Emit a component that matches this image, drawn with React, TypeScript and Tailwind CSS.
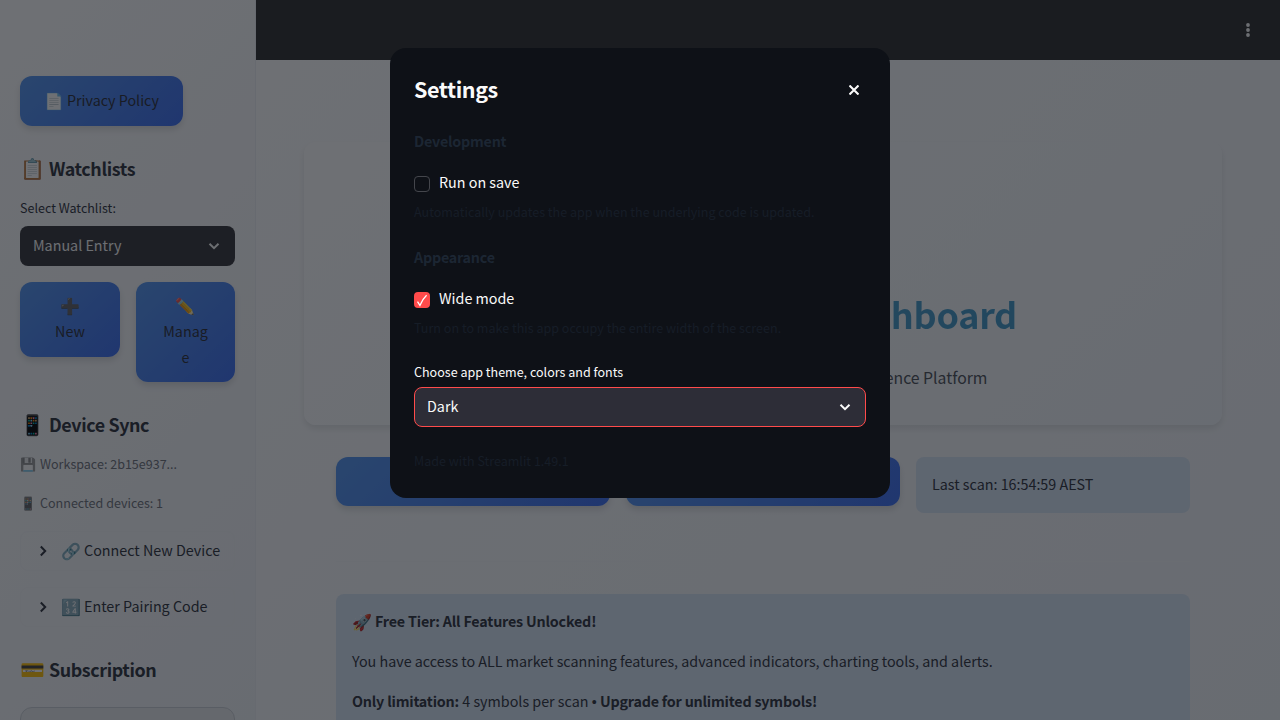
import type { ReactNode } from "react";

const blue =
  "bg-[linear-gradient(135deg,#5596ef_0%,#3d6ff2_100%)] shadow-[0_4px_6px_rgba(0,0,0,0.12)] rounded-xl text-[#2b2e38]";

function Heading({ icon, children }: { icon: string; children: ReactNode }) {
  return (
    <h3 className="flex h-6 items-center gap-[5px] whitespace-nowrap text-[17.9px] font-bold leading-6 tracking-[-0.4px] text-[#2e323c]">
      <span className="w-6 text-[20px] font-normal tracking-normal">{icon}</span>
      {children}
    </h3>
  );
}

function Chevron({ className }: { className: string }) {
  return (
    <svg viewBox="0 0 12 12" className={className} fill="none" stroke="currentColor" strokeWidth="2">
      <path d="M1.5 3.8 6 8.2l4.5-4.4" />
    </svg>
  );
}

function Caption({ icon, children }: { icon: string; children: ReactNode }) {
  return (
    <p className="flex h-5 items-center gap-1 whitespace-nowrap text-[12.54px] leading-5 text-[#6f737b]">
      <span className="w-4 text-[13px] opacity-60">{icon}</span>
      {children}
    </p>
  );
}

function Expander({ icon, children }: { icon: string; children: ReactNode }) {
  return (
    <div className="flex h-10 w-[215px] items-center whitespace-nowrap rounded-lg border border-[#f3f5f8] pb-[2px] pl-4 text-[14.32px] text-[#2e323c]">
      <Chevron className="mr-3 mt-[2px] size-3 -rotate-90" />
      <span className="w-[23px] text-[16px]">{icon}</span>
      {children}
    </div>
  );
}

function Sidebar() {
  return (
    <aside className="h-[720px] w-64 shrink-0 overflow-hidden border-r border-[#eef1f5] bg-[linear-gradient(135deg,#ffffff_0%,#f1f4f8_100%)] px-5 pt-[76px]">
      <div className={`${blue} flex h-[50px] w-[163px] items-center justify-center gap-[3px] pb-[2px] text-[14.3px]`}>
        <span className="text-[16px]">📄</span>Privacy Policy
      </div>
      <div className="mt-[30px]">
        <Heading icon="📋">Watchlists</Heading>
      </div>
      <p className="mt-[18px] h-5 text-[12.54px] leading-5 text-[#2e323c]">Select Watchlist:</p>
      <div className="mt-2 flex h-10 w-[215px] items-center justify-between rounded-lg bg-[#36363a] px-[13px] pr-[15px] text-[14.32px] leading-5 text-[#fafafa]">
        <span className="pb-[2px]">Manual Entry</span>
        <Chevron className="size-3" />
      </div>
      <div className="mt-4 flex h-[100px] w-[215px] items-start gap-4">
        <div className={`${blue} flex h-[75px] w-[100px] flex-col items-center pt-[11px] text-[14.3px] leading-[25.6px]`}>
          <span className="h-[25px] text-[16px]">➕</span>
          <span>New</span>
        </div>
        <div className={`${blue} flex h-[100px] w-[99px] flex-col items-center pt-[11px] text-[14.3px] leading-[25.6px]`}>
          <span className="h-[25px] text-[16px]">✏️</span>
          <span>Manag</span>
          <span>e</span>
        </div>
      </div>
      <div className="mt-[30px]">
        <Heading icon="📱">Device Sync</Heading>
      </div>
      <div className="mt-[18px] flex flex-col gap-[19px]">
        <Caption icon="💾">Workspace: 2b15e937...</Caption>
        <Caption icon="📱">Connected devices: 1</Caption>
      </div>
      <div className="mt-[18px] flex flex-col gap-4">
        <Expander icon="🔗">Connect New Device</Expander>
        <Expander icon="🔢">Enter Pairing Code</Expander>
      </div>
      <div className="mt-[30px]">
        <Heading icon="💳">Subscription</Heading>
      </div>
      <div className="mt-[26px] h-20 w-[215px] rounded-xl border border-[#cbd0d6] bg-[#e9ebee]" />
    </aside>
  );
}

function Main() {
  return (
    <main className="flex h-[720px] min-w-0 flex-1 flex-col overflow-hidden bg-[linear-gradient(135deg,#ffffff_0%,#f8fafc_40%,#f1f4f8_100%)]">
      <header className="flex h-[60px] shrink-0 items-center justify-end bg-[#2d2d2f] pr-[30px]">
        <svg viewBox="0 0 4 14" className="h-[14px] w-1" fill="#fafafa">
          <circle cx="2" cy="2" r="1.9" />
          <circle cx="2" cy="7" r="1.9" />
          <circle cx="2" cy="12" r="1.9" />
        </svg>
      </header>
      <section className="ml-12 mt-[82px] flex h-[283px] w-[918px] shrink-0 flex-col items-center rounded-xl bg-[linear-gradient(135deg,#ffffff_0%,#f1f5f9_100%)] pt-[141px] shadow-[0_4px_6px_rgba(0,0,0,0.09)]">
        <h1 className="flex h-[60px] w-[508px] justify-end whitespace-nowrap text-[36px] font-bold leading-[60px] tracking-[-0.3px]">
          <span className="bg-[linear-gradient(135deg,#4f9fc4,#4199c8)] bg-clip-text text-transparent">
            Market Scanner Dashboard
          </span>
        </h1>
        <p className="mt-[21px] h-7 w-[449px] whitespace-nowrap text-right text-[15.8px] leading-7 text-[#4b5058]">
          Professional Market Intelligence Platform
        </p>
      </section>
      <div className="ml-20 mt-8 flex w-[854px] shrink-0 items-start gap-4">
        <div className={`${blue} h-[49px] w-[274px]`} />
        <div className={`${blue} h-[49px] w-[274px]`} />
        <div className="flex h-14 w-[274px] items-center rounded-lg bg-[#d8e5f5] px-4 pb-[2px] text-[14.32px] text-[#2e323c]">
          Last scan: 16:54:59 AEST
        </div>
      </div>
      <hr className="ml-20 mt-12 w-[854px] shrink-0 border-t border-[#f6f7f9]" />
      <section className="ml-20 mt-8 flex h-[180px] w-[854px] shrink-0 flex-col gap-4 rounded-lg bg-[#d8e5f5] px-4 pt-[15px] text-[14.32px] leading-6 text-[#2e323c]">
        <p className="flex h-6 items-center gap-[3px] font-bold tracking-[-0.19px]">
          <span className="text-[16px] font-normal tracking-normal">🚀</span>Free Tier: All Features Unlocked!
        </p>
        <p className="h-6 whitespace-nowrap">
          You have access to ALL market scanning features, advanced indicators, charting tools, and alerts.
        </p>
        <p className="h-6 whitespace-nowrap">
          <b className="tracking-[-0.2px]">Only limitation:</b> 4 symbols per scan{" "}
          <span className="inline-block w-[5px] font-['Liberation_Sans']">•</span>{" "}
          <b className="tracking-[-0.2px]">Upgrade for unlimited symbols!</b>
        </p>
      </section>
    </main>
  );
}

function Settings() {
  return (
    <div role="dialog" className="absolute left-[390px] top-12 h-[450px] w-[500px] rounded-2xl bg-[#0e1117] px-6 pt-6 text-[#fafafa]">
      <div className="flex h-9 items-center justify-between pr-[7px]">
        <h2 className="pb-[2px] text-[21.5px] font-bold tracking-[-0.4px]">Settings</h2>
        <svg viewBox="0 0 10 10" className="size-[10px]" stroke="#fafafa" strokeWidth="2.1">
          <path d="M0.5 0.5 9.5 9.5M9.5 0.5 0.5 9.5" />
        </svg>
      </div>
      <h3 className="mt-[21px] h-6 text-[14.3px] font-bold leading-6 tracking-[-0.22px] text-[#1c2633]">Development</h3>
      <label className="mt-[17px] flex h-6 items-center gap-[9px] text-[14.32px]">
        <span className="mt-[4px] size-4 rounded border border-[#44464c]" />
        Run on save
      </label>
      <p className="mt-[8px] h-5 whitespace-nowrap text-[12.54px] leading-5 text-[#161d27]">
        Automatically updates the app when the underlying code is updated.
      </p>
      <h3 className="mt-[23px] h-6 text-[14.3px] font-bold leading-6 tracking-[-0.22px] text-[#1c2633]">Appearance</h3>
      <label className="mt-[17px] flex h-6 items-center gap-[9px] text-[14.32px]">
        <span className="mt-[4px] flex size-4 items-center justify-center rounded bg-[#ff4b4b]">
          <svg viewBox="0 0 16 16" className="size-4" fill="none" stroke="white" strokeWidth="1.3">
            <path d="M3.5 9.6 5.9 13.4 C7.4 9.6 9.6 6 12.6 3.2" />
          </svg>
        </span>
        Wide mode
      </label>
      <p className="mt-[8px] h-5 whitespace-nowrap text-[12.56px] leading-5 text-[#161d27]">
        Turn on to make this app occupy the entire width of the screen.
      </p>
      <p className="mt-6 h-5 text-[12.54px] leading-5">Choose app theme, colors and fonts</p>
      <div className="mt-[5px] flex h-10 items-center justify-between rounded-lg border border-[#ff4b4b] bg-[#2d2d37] pl-3 pr-[14px] text-[14.32px]">
        <span className="pb-[2px]">Dark</span>
        <Chevron className="size-3" />
      </div>
      <p className="mt-[24px] h-5 text-[12.54px] leading-5 text-[#161d27]">Made with Streamlit 1.49.1</p>
    </div>
  );
}

export default function App() {
  return (
    <div className="relative flex h-[720px] w-[1280px] overflow-hidden font-['Noto_Sans_CJK_SC','Noto_Color_Emoji',sans-serif]">
      <Sidebar />
      <Main />
      <div className="absolute inset-0 bg-[#0e1117]/60" />
      <Settings />
    </div>
  );
}
